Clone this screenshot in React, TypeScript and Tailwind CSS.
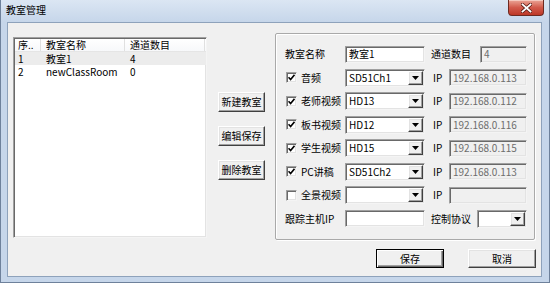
import React from 'react';

// classic Win32 control looks
const sunken =
  'border border-t-[#a0a0a0] border-l-[#a0a0a0] border-r-[#f4f4f4] border-b-[#f4f4f4] shadow-[inset_1px_1px_0_#696969,inset_-1px_-1px_0_#e3e3e3]';
const raised =
  'bg-[#f0f0f0] border border-t-[#ffffff] border-l-[#ffffff] border-r-[#404040] border-b-[#404040] shadow-[inset_-1px_-1px_0_#a0a0a0,inset_1px_1px_0_#e3e3e3]';

const Arrow = () => (
  <svg width="7" height="4" viewBox="0 0 7 4">
    <path d="M0 0h7L3.5 4z" fill="#000" />
  </svg>
);

const Combo = ({ value, w }: { value?: string; w: string }) => (
  <div className={`${w} h-[18px] flex bg-white ${sunken} pl-[3px] pr-[1px] py-[1px]`}>
    <span className="flex-1 self-center leading-[14px] whitespace-nowrap overflow-hidden">{value}</span>
    <span className={`w-[15px] flex items-center justify-center ${raised}`}>
      <Arrow />
    </span>
  </div>
);

const TextBox = ({ value, w, disabled }: { value?: string; w: string; disabled?: boolean }) => (
  <div
    className={`${w} h-[17px] flex items-center pl-[3px] leading-[14px] whitespace-nowrap ${sunken} ${
      disabled ? 'bg-[#f0f0f0] text-[#6d6d6d]' : 'bg-white'
    }`}
  >
    {value}
  </div>
);

const Check = ({ checked }: { checked: boolean }) => (
  <span className={`w-[11px] h-[11px] shrink-0 bg-white flex items-center justify-center ${sunken}`}>
    {checked && (
      <svg width="7" height="7" viewBox="0 0 7 7">
        <path d="M0.5 3.2L2.6 5.5L6.5 0.8" stroke="#000" strokeWidth="1.6" fill="none" />
      </svg>
    )}
  </span>
);

const channels = [
  { name: '音频', on: true, src: 'SD51Ch1', ip: '192.168.0.113' },
  { name: '老师视频', on: true, src: 'HD13', ip: '192.168.0.112' },
  { name: '板书视频', on: true, src: 'HD12', ip: '192.168.0.116' },
  { name: '学生视频', on: true, src: 'HD15', ip: '192.168.0.115' },
  { name: 'PC讲稿', on: true, src: 'SD51Ch2', ip: '192.168.0.113' },
  { name: '全景视频', on: false, src: '', ip: '' },
];

const rooms = [
  { id: '1', name: '教室1', count: '4' },
  { id: '2', name: 'newClassRoom', count: '0' },
];

export default function App() {
  return (
    <div className="w-[550px] h-[283px] flex flex-col bg-[#c6d6ea] border-x border-b border-[#6e819b] font-['Noto_Sans_CJK_SC',sans-serif] text-[10px] text-black leading-none">
      {/* title bar */}
      <div className="h-[22px] flex justify-between items-start bg-gradient-to-b from-[#dbe6f3] to-[#c6d6ea]">
        <span className="self-center pl-[5px] pb-[2px]">教室管理</span>
        <div className="mr-[5px] w-[36px] h-[16px] rounded-b-[4px] border border-t-0 border-[#6d2a21] bg-gradient-to-b from-[#eaa597] via-[#d25a4b] to-[#bd3726] flex items-center justify-center shadow-[inset_0_1px_0_#f5c9be]">
          <svg width="11" height="10" viewBox="0 0 11 10">
            <path d="M1.5 1.5L9.5 8.5M9.5 1.5L1.5 8.5" stroke="#5a1d15" strokeWidth="3.4" strokeLinecap="square" />
            <path d="M1.5 1.5L9.5 8.5M9.5 1.5L1.5 8.5" stroke="#fff" strokeWidth="1.8" strokeLinecap="square" />
          </svg>
        </div>
      </div>

      {/* client area */}
      <div className="flex-1 ml-[6px] mr-[7px] mb-[5px] bg-[#f0f0f0] border border-[#8ea2bb] flex flex-col">
        <div className="flex items-start pt-[10px] pl-[5px]">
          {/* list view */}
          <div className={`w-[194px] h-[201px] mt-[4px] bg-white ${sunken} pt-[1px] pl-[1px]`}>
            <div className="h-[13px] flex border-b border-[#e5e5e5] bg-gradient-to-b from-white to-[#f7f8fa] leading-[12px]">
              <span className="w-[26px] pl-[3px] flex items-center border-r border-[#e0e0e0] whitespace-nowrap">序..</span>
              <span className="w-[84px] pl-[5px] flex items-center border-r border-[#e0e0e0]">教室名称</span>
              <span className="w-[80px] pl-[5px] flex items-center border-r border-[#e0e0e0]">通道数目</span>
            </div>
            {rooms.map((r, i) => (
              <div key={r.id} className={`h-[13px] flex items-center leading-[12px] ${i === 0 ? 'bg-[#ececec]' : ''}`}>
                <span className="w-[26px] pl-[3px]">{r.id}</span>
                <span className="w-[84px] pl-[5px]">{r.name}</span>
                <span className="w-[80px] pl-[5px]">{r.count}</span>
              </div>
            ))}
          </div>

          {/* side buttons */}
          <div className="ml-[11px] mt-[59px] flex flex-col gap-[14px]">
            {['新建教室', '编辑保存', '删除教室'].map((t) => (
              <button key={t} className={`w-[47px] h-[20px] flex items-center justify-center whitespace-nowrap ${raised}`}>
                {t}
              </button>
            ))}
          </div>

          {/* group box */}
          <div className="ml-[10px] w-[260px] h-[207px] border border-[#a9a9a9] rounded-[2px] shadow-[inset_1px_1px_0_#fff,1px_1px_0_#fff] pt-[11px] pl-[9px] flex flex-col gap-[5.5px]">
            <div className="h-[18px] flex items-center">
              <span className="w-[60px]">教室名称</span>
              <TextBox w="w-[80px]" value="教室1" />
              <span className="w-[55px] pl-[6px]">通道数目</span>
              <TextBox w="w-[47px]" value="4" disabled />
            </div>
            {channels.map((c) => (
              <div key={c.name} className="h-[18px] flex items-center">
                <span className="w-[60px] flex items-center gap-[4px] pl-[1px] whitespace-nowrap">
                  <Check checked={c.on} />
                  <span>{c.name}</span>
                </span>
                <Combo w="w-[80px]" value={c.src} />
                <span className="w-[24px] pl-[8px]">IP</span>
                <TextBox w="w-[78px]" value={c.ip} disabled />
              </div>
            ))}
            <div className="h-[18px] flex items-center">
              <span className="w-[60px] whitespace-nowrap">跟踪主机IP</span>
              <TextBox w="w-[80px]" />
              <span className="w-[52px] pl-[6px]">控制协议</span>
              <Combo w="w-[50px]" />
            </div>
          </div>
        </div>

        {/* bottom buttons */}
        <div className="flex justify-end gap-[24px] pr-[5px] mt-[9px]">
          <button className="w-[68px] h-[19px] flex items-center justify-center bg-[#f0f0f0] border border-black shadow-[inset_1px_1px_0_#fff,inset_-1px_-1px_0_#696969,inset_-2px_-2px_0_#a0a0a0]">
            保存
          </button>
          <button className={`w-[68px] h-[19px] flex items-center justify-center ${raised}`}>取消</button>
        </div>
      </div>
    </div>
  );
}
